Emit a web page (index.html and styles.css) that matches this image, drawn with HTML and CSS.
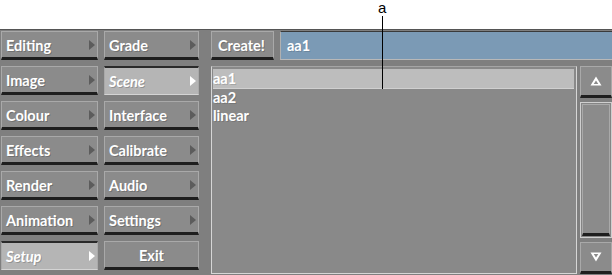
FILE: index.html
```html
<!DOCTYPE html>
<html>
<head lang="en">
    <meta charset="UTF-8">
    <title>Scene setup</title>
    <link rel="stylesheet" href="styles.css">
</head>
<body>
<div class="callout">
    <span class="callout-label">a</span>
    <span class="callout-line"></span>
</div>
<div class="top-space"></div>
<div class="panel">
    <div class="menu">
        <div class="btn">Editing<i class="arr"></i></div>
        <div class="btn">Grade<i class="arr"></i></div>
        <div class="btn">Image<i class="arr"></i></div>
        <div class="btn on">Scene<i class="arr"></i></div>
        <div class="btn">Colour<i class="arr"></i></div>
        <div class="btn">Interface<i class="arr"></i></div>
        <div class="btn">Effects<i class="arr"></i></div>
        <div class="btn">Calibrate<i class="arr"></i></div>
        <div class="btn">Render<i class="arr"></i></div>
        <div class="btn">Audio<i class="arr"></i></div>
        <div class="btn">Animation<i class="arr"></i></div>
        <div class="btn">Settings<i class="arr"></i></div>
        <div class="btn on">Setup<i class="arr"></i></div>
        <div class="btn center">Exit</div>
    </div>
    <div class="main">
        <div class="toprow">
            <div class="btn create">Create!</div>
            <div class="field">aa1</div>
        </div>
        <div class="listrow">
            <div class="list">
                <div class="item sel">aa1</div>
                <div class="item">aa2</div>
                <div class="item">linear</div>
            </div>
            <div class="scroll">
                <div class="sbtn">
                    <svg width="14" height="12" viewBox="0 0 14 12"><path d="M7 1.5 L12.5 10.5 L1.5 10.5 Z M7 5.5 L9.3 9 L4.7 9 Z" fill="#fff" fill-rule="evenodd"/></svg>
                </div>
                <div class="track"><div class="thumb"></div></div>
                <div class="sbtn">
                    <svg width="14" height="12" viewBox="0 0 14 12"><path d="M7 10.5 L12.5 1.5 L1.5 1.5 Z M7 6.5 L9.3 3 L4.7 3 Z" fill="#fff" fill-rule="evenodd"/></svg>
                </div>
            </div>
        </div>
    </div>
</div>
</body>
</html>
```

FILE: styles.css
```css
*{
    margin: 0;
    padding: 0;
    box-sizing: border-box;
}
body{
    width: 612px;
    height: 275px;
    background: #fff;
    font-family: Lato, "Open Sans", sans-serif;
    position: relative;
    overflow: hidden;
}
.top-space{
    height: 29px;
}
.callout{
    position: absolute;
    left: 376px;
    top: 0;
    width: 14px;
    height: 90px;
    z-index: 2;
}
.callout-label{
    position: absolute;
    left: 2px;
    top: 0;
    font-family: "Liberation Sans", sans-serif;
    font-size: 15px;
    line-height: 15px;
    color: #000;
}
.callout-line{
    position: absolute;
    left: 6px;
    top: 16px;
    width: 1px;
    height: 73px;
    background: #000;
}
.panel{
    height: 246px;
    background: #7f7f7f;
    border-top: 1px solid #555;
    display: flex;
    padding-top: 1px;
}
.menu{
    display: grid;
    grid-template-columns: 97px 95px;
    grid-auto-rows: 29px;
    column-gap: 6px;
    row-gap: 6px;
    padding-left: 1px;
    width: 199px;
}
.btn{
    position: relative;
    background: #8b8b8b;
    border: 1px solid #a9a9a9;
    border-bottom: 3px solid #1e1e1e;
    color: #fff;
    font-size: 14.5px;
    font-weight: bold;
    line-height: 27px;
    padding-left: 4px;
    text-shadow: 1px 1px 0 rgba(0,0,0,.2);
}
.btn.on{
    background: #b5b5b5;
    border-top: 2px solid #2a2a2a;
    border-bottom: 1px solid #d4d4d4;
    font-style: italic;
    line-height: 28px;
}
.btn.center{
    text-align: center;
    padding-left: 0;
}
.arr{
    position: absolute;
    right: 2px;
    top: 8px;
    width: 0;
    height: 0;
    border-top: 5px solid transparent;
    border-bottom: 5px solid transparent;
    border-left: 6px solid #5c5c5c;
}
.btn.on .arr{
    border-left-color: #fff;
    top: 8px;
}
.main{
    flex: 1;
    padding-left: 12px;
    display: flex;
    flex-direction: column;
}
.toprow{
    display: flex;
    gap: 6px;
    height: 29px;
}
.create{
    width: 63px;
    padding-left: 6px;
}
.field{
    flex: 1;
    background: #7b9ab5;
    border-top: 1px solid #3a3a3a;
    border-bottom: 1px solid #b8b8b8;
    border-left: 1px solid #b0b0b0;
    color: #fff;
    font-size: 14.5px;
    font-weight: bold;
    line-height: 27px;
    padding-left: 6px;
    text-shadow: 1px 1px 0 rgba(0,0,0,.15);
}
.listrow{
    display: flex;
    margin-top: 6px;
    height: 208px;
    gap: 3px;
}
.list{
    width: 366px;
    background: #898989;
    border: 1px solid #d6d6d6;
    border-top-color: #a5a5a5;
    padding: 2px 2px 0 1px;
}
.item{
    height: 18px;
    line-height: 18px;
    color: #fff;
    font-size: 14.5px;
    font-weight: bold;
    text-shadow: 1px 1px 0 rgba(0,0,0,.15);
}
.item.sel{
    background: #bdbdbd;
    border-bottom: 1px solid #d0d0d0;
    height: 20px;
    line-height: 20px;
}
.scroll{
    flex: 1;
    display: flex;
    flex-direction: column;
}
.sbtn{
    height: 32px;
    background: #8b8b8b;
    border: 1px solid #a9a9a9;
    border-bottom: 3px solid #1e1e1e;
    display: flex;
    align-items: center;
    justify-content: center;
}
.track{
    flex: 1;
    margin: 4px 0 4px;
    border: 1px solid #cfcfcf;
    padding: 1px;
    background: #858585;
}
.thumb{
    height: 100%;
    background: #8b8b8b;
    border: 1px solid #a9a9a9;
    border-bottom: 3px solid #1e1e1e;
}
```
